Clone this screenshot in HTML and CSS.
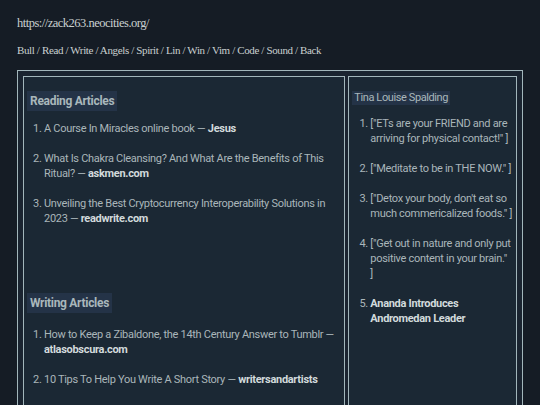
FILE: index.html
```html
<!DOCTYPE html>
<html lang="en">
<head>
<meta charset="utf-8">
<title>zack263</title>
<link rel="stylesheet" href="styles.css">
</head>
<body>
<header class="site-head">
  <p class="url">https://zack263.neocities.org/</p>
  <nav class="nav">Bull / Read / Write / Angels / Spirit / Lin / Win / Vim / Code / Sound / Back</nav>
</header>
<main class="frame">
  <section class="panel main-panel">
    <h2 class="tag">Reading Articles</h2>
    <ol class="list">
      <li>A Course In Miracles online book — <b>Jesus</b></li>
      <li>What Is Chakra Cleansing? And What Are the Benefits of This Ritual? — <b>askmen.com</b></li>
      <li>Unveiling the Best Cryptocurrency Interoperability Solutions in 2023 — <b>readwrite.com</b></li>
    </ol>
    <h2 class="tag second">Writing Articles</h2>
    <ol class="list writing">
      <li>How to Keep a Zibaldone, the 14th Century Answer to Tumblr — <b>atlasobscura.com</b></li>
      <li>10 Tips To Help You Write A Short Story — <b>writersandartists</b></li>
      <li>Why You Should Keep a Commonplace Book — <b>medium.com</b></li>
    </ol>
  </section>
  <aside class="panel side-panel">
    <h3 class="tag small">Tina Louise Spalding</h3>
    <ol class="list">
      <li>["ETs are your FRIEND and are arriving for physical contact!" ]</li>
      <li>["Meditate to be in THE NOW." ]</li>
      <li>["Detox your body, don't eat so much commericalized foods." ]</li>
      <li>["Get out in nature and only put positive content in your brain."<br>]</li>
      <li><b>Ananda Introduces<br>Andromedan Leader</b></li>
    </ol>
  </aside>
</main>
</body>
</html>
```

FILE: styles.css
```css
html, body {
  margin: 0;
  background: #151c25;
}
body {
  padding: 14px 17px 40px;
  color: #aab6ba;
  font-family: "Roboto", sans-serif;
  font-size: 11px;
  letter-spacing: -0.3px;
}
.site-head {
  font-family: "Liberation Serif", serif;
  color: #c9d0d0;
}
.url {
  margin: 0;
  font-size: 12.5px;
  line-height: 19px;
  letter-spacing: -0.5px;
}
.nav {
  margin-top: 8px;
  font-size: 11px;
  line-height: 18px;
  letter-spacing: -0.37px;
}
.frame {
  margin-top: 11px;
  border: 1px solid #a2b6bb;
  background: #1a2430;
  padding: 5px;
  display: flex;
  gap: 3px;
  align-items: stretch;
}
.panel {
  border: 1px solid #a2b6bb;
  background: #1b2834;
  padding: 14px 3px 20px;
}
.main-panel {
  width: 309px;
  padding-right: 9px;
}
.side-panel {
  width: 164px;
  padding-right: 0;
}
.tag {
  display: inline-block;
  margin: 0;
  background: #243347;
  color: #a9b7bb;
  font-size: 12px;
  font-weight: bold;
  line-height: 20px;
  padding: 0 3px;
  letter-spacing: -0.3px;
}
.tag.second {
  margin-top: 52px;
}
.tag.small {
  font-weight: normal;
  font-size: 11px;
  line-height: 14px;
  padding: 0 2px;
  letter-spacing: -0.4px;
}
.list {
  margin: 10px 0 0;
  padding-left: 17px;
  line-height: 15px;
}
.list.writing {
  margin-top: 14px;
}
.list li {
  margin-bottom: 15px;
}
.side-panel .list {
  margin-top: 11px;
  padding-left: 18px;
}
.list b {
  color: #d2dadc;
}
```
